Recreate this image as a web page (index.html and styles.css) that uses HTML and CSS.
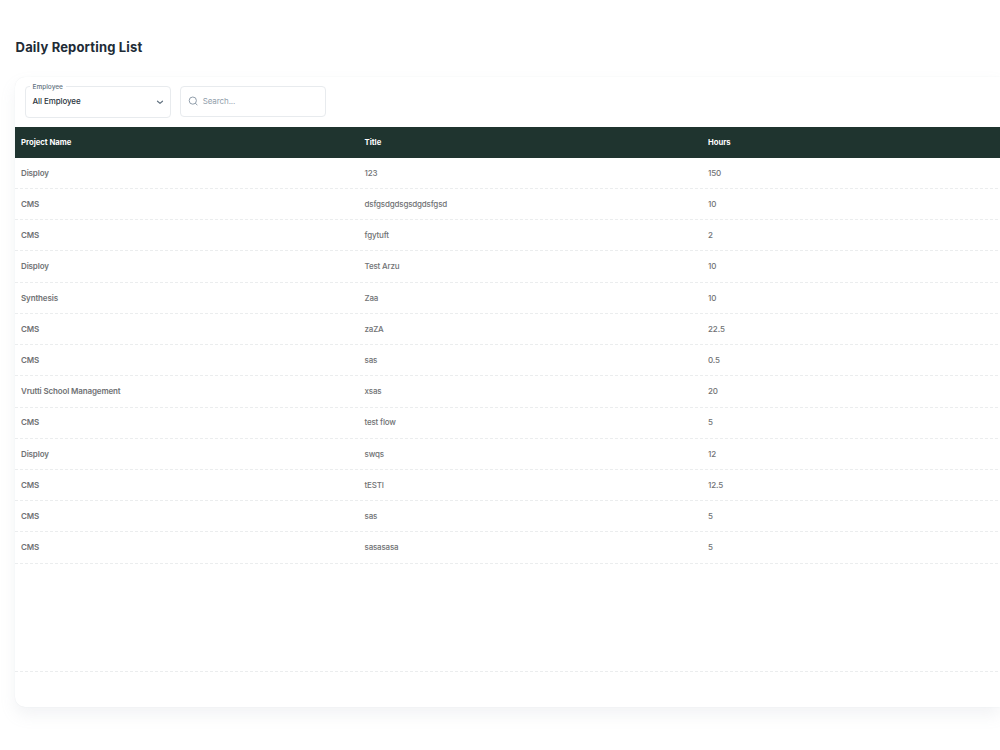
FILE: index.html
```
<!DOCTYPE html>
<html lang="en">
<head>
<meta charset="utf-8">
<title>Daily Reporting List</title>
<link rel="stylesheet" href="styles.css">
</head>
<body>
<main class="page">
  <h1 class="title">Daily Reporting List</h1>
  <section class="card">
    <div class="toolbar">
      <div class="field select">
        <span class="label">Employee</span>
        <span class="value">All Employee</span>
        <svg class="chevron" width="8" height="6" viewBox="0 0 8 6"><path d="M1.5 2.2 4 4.4 6.5 2.2" fill="none" stroke="#637381" stroke-width="1.2" stroke-linecap="round" stroke-linejoin="round"/></svg>
      </div>
      <div class="field search">
        <svg class="glass" width="10" height="10" viewBox="0 0 10 10"><circle cx="4.8" cy="4.6" r="3.6" fill="none" stroke="#919eab" stroke-width="1"/><path d="M7.5 7.3 9.1 9" stroke="#919eab" stroke-width="1" stroke-linecap="round"/></svg>
        <span class="placeholder">Search...</span>
      </div>
    </div>
    <div class="table">
      <div class="row head"><span>Project Name</span><span>Title</span><span>Hours</span></div>
      <div class="row"><b>Disploy</b><span>123</span><span class="num">150</span></div>
      <div class="row"><b>CMS</b><span>dsfgsdgdsgsdgdsfgsd</span><span class="num">10</span></div>
      <div class="row"><b>CMS</b><span>fgytuft</span><span class="num">2</span></div>
      <div class="row"><b>Disploy</b><span>Test Arzu</span><span class="num">10</span></div>
      <div class="row"><b>Synthesis</b><span>Zaa</span><span class="num">10</span></div>
      <div class="row"><b>CMS</b><span>zaZA</span><span class="num">22.5</span></div>
      <div class="row"><b>CMS</b><span>sas</span><span class="num">0.5</span></div>
      <div class="row"><b>Vrutti School Management</b><span>xsas</span><span class="num">20</span></div>
      <div class="row"><b>CMS</b><span>test flow</span><span class="num">5</span></div>
      <div class="row"><b>Disploy</b><span>swqs</span><span class="num">12</span></div>
      <div class="row"><b>CMS</b><span>tESTI</span><span class="num">12.5</span></div>
      <div class="row"><b>CMS</b><span>sas</span><span class="num">5</span></div>
      <div class="row"><b>CMS</b><span>sasasasa</span><span class="num">5</span></div>
    </div>
    <div class="footer"></div>
  </section>
</main>
</body>
</html>
```
FILE: styles.css
```
* { box-sizing: border-box; }
body {
  margin: 0;
  background: #fff;
  font-family: Inter, "Liberation Sans", sans-serif;
  font-size: 8px;
}
.page { height: 750px; padding: 37px 0 0 15px; }
.title {
  margin: 0 0 20px 0.6px;
  font-size: 13px;
  line-height: 20px;
  font-weight: 650;
  letter-spacing: 0.17px;
  color: #212b36;
}
.card {
  width: 100%;
  height: 630px;
  display: flex;
  flex-direction: column;
  background: #fff;
  border-radius: 10px 0 0 10px;
  box-shadow: 0 0 1px rgba(145, 158, 171, .2), 0 8px 16px 0 rgba(145, 158, 171, .12);
}
.toolbar { display: flex; gap: 9.2px; height: 49.6px; padding: 8.5px 9.5px; }
.field {
  display: flex;
  align-items: center;
  width: 146px;
  height: 31px;
  border: 1px solid #e8ebee;
  border-radius: 4px;
  padding: 0 7px;
}
.select { position: relative; height: 32px; justify-content: space-between; color: #2b3540; }
.select .value { margin-top: -2px; font-weight: 450; letter-spacing: -0.1px; }
.chevron { margin-right: -1px; }
.label {
  position: absolute;
  top: -5px;
  left: 4px;
  padding: 0 3px;
  font-size: 6.5px;
  line-height: 10px;
  font-weight: 500;
  background: #fff;
  color: #637381;
}
.search { gap: 5px; color: #919eab; }
.placeholder { letter-spacing: -0.1px; }
.table { height: 544px; }
.row {
  display: grid;
  grid-template-columns: 343.5px 343.5px 1fr;
  align-items: center;
  height: 31.23px;
  padding: 0 6px 1.4px;
  color: #707274;
  font-weight: 450;
  letter-spacing: -0.18px;
  background: linear-gradient(90deg, #ebedee 60%, transparent 60%) 0 100% / 5px 1px repeat-x;
}
.row b { font-weight: 600; letter-spacing: -0.14px; }
.row .num { letter-spacing: -0.1px; }
.row.head { padding-bottom: 0; background: #1f342f; color: #fff; font-weight: 700; font-size: 7.7px; letter-spacing: 0; }
.footer { height: 36px; background: linear-gradient(90deg, #ebedee 60%, transparent 60%) 0 0 / 5px 1px repeat-x; }
```
